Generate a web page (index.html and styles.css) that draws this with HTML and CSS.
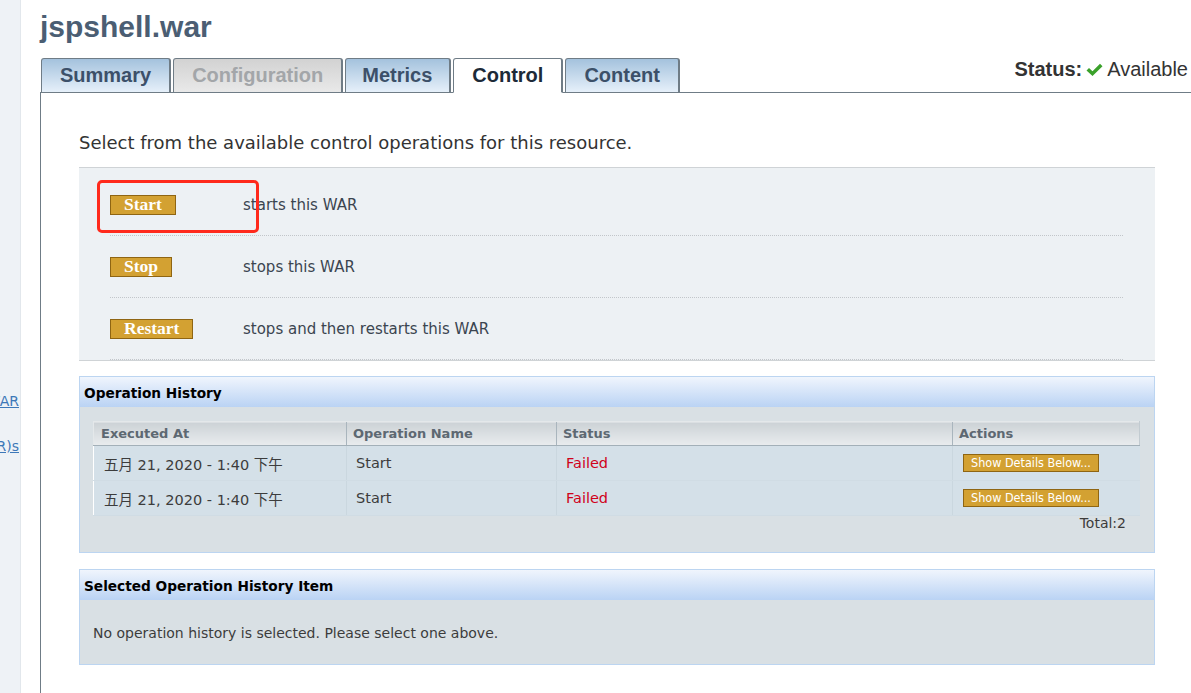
FILE: index.html
```html
<!DOCTYPE html>
<html>
<head>
<meta charset="utf-8">
<title>jspshell.war</title>
<link rel="stylesheet" href="styles.css">
</head>
<body>
<div class="page">
  <aside class="sidebar">
    <a class="side-link">jspshell.WAR</a>
    <a class="side-link second">Child Resource(R)s</a>
  </aside>
  <main class="main">
    <h1 class="title">jspshell.war</h1>
    <div class="tabbar">
      <nav class="tabs">
        <span class="tab">Summary</span>
        <span class="tab disabled">Configuration</span>
        <span class="tab narrow">Metrics</span>
        <span class="tab active">Control</span>
        <span class="tab">Content</span>
      </nav>
      <div class="status">
        <b>Status:</b>
        <svg class="check" width="17" height="14" viewBox="0 0 17 14"><path d="M0.5 7.5 L3 5 L6.5 8.3 L14 0.8 L16.5 3.3 L6.5 13 Z" fill="#3aa12a"/></svg>
        <span>Available</span>
      </div>
    </div>
    <section class="tabpanel">
      <p class="intro">Select from the available control operations for this resource.</p>
      <div class="ops">
        <div class="op-row">
          <span class="op-cell"><button class="btn">Start</button></span>
          <span class="op-desc">starts this WAR</span>
        </div>
        <div class="op-row">
          <span class="op-cell"><button class="btn">Stop</button></span>
          <span class="op-desc">stops this WAR</span>
        </div>
        <div class="op-row">
          <span class="op-cell"><button class="btn">Restart</button></span>
          <span class="op-desc">stops and then restarts this WAR</span>
        </div>
        <div class="highlight"></div>
      </div>

      <div class="panel">
        <div class="panel-head">Operation History</div>
        <div class="panel-body">
          <table class="grid">
            <thead>
              <tr>
                <th class="c1">Executed At</th>
                <th class="c2">Operation Name</th>
                <th class="c3">Status</th>
                <th class="c4">Actions</th>
              </tr>
            </thead>
            <tbody>
              <tr>
                <td class="c1">五月 21, 2020 - 1:40 下午</td>
                <td class="c2">Start</td>
                <td class="c3 failed">Failed</td>
                <td class="c4"><button class="btn small">Show Details Below...</button></td>
              </tr>
              <tr>
                <td class="c1">五月 21, 2020 - 1:40 下午</td>
                <td class="c2">Start</td>
                <td class="c3 failed">Failed</td>
                <td class="c4"><button class="btn small">Show Details Below...</button></td>
              </tr>
            </tbody>
          </table>
          <div class="total">Total:2</div>
        </div>
      </div>

      <div class="panel second">
        <div class="panel-head">Selected Operation History Item</div>
        <div class="panel-body note">No operation history is selected. Please select one above.</div>
      </div>
    </section>
  </main>
</div>
</body>
</html>
```
FILE: styles.css
```css
* { box-sizing: border-box; }

body {
  margin: 0;
  font-family: "DejaVu Sans", "Noto Sans CJK SC", sans-serif;
  color: #333;
  background: #fff;
}

.page {
  display: flex;
  height: 693px;
  overflow: hidden;
}

.sidebar {
  width: 21px;
  flex: none;
  background: #eef2f6;
  border-right: 1px solid #e2e7ec;
  padding-top: 392px;
  padding-right: 1px;
  display: flex;
  flex-direction: column;
  align-items: flex-end;
  overflow: hidden;
}

.side-link {
  white-space: nowrap;
  color: #3d78b8;
  text-decoration: underline;
  font-size: 14px;
  line-height: 18px;
}

.side-link.second { margin-top: 27px; }

.main {
  flex: 1;
  min-width: 0;
  padding-left: 19px;
  display: flex;
  flex-direction: column;
}

.title {
  margin: 0;
  padding-top: 11px;
  font: bold 30px/32px "Liberation Sans", Arial, sans-serif;
  color: #4b5e73;
}

.tabbar {
  margin-top: 15px;
  height: 35px;
  display: flex;
  justify-content: space-between;
  align-items: flex-end;
  border-bottom: 1px solid #6f7c86;
}

.tabs {
  display: flex;
  align-items: flex-end;
  gap: 2px;
  margin-left: 1px;
  margin-bottom: -1px;
}

.tab {
  height: 35px;
  padding: 0 18px;
  border: 1px solid #6f7c86;
  border-right-width: 2px;
  border-radius: 3px 3px 0 0;
  background: linear-gradient(#a4c2dd, #e6f0fa);
  font: bold 20px/33px "Liberation Sans", Arial, sans-serif;
  color: #3c5069;
}

.tab.narrow { padding: 0 17px 0 16px; }

.tab.disabled {
  background: linear-gradient(#d2d2d2, #e9e9e9);
  color: #a3a6a9;
}

.tab.active {
  background: #fff;
  border-bottom-color: #fff;
  color: #1d2a38;
}

.status {
  padding: 0 3px 11px 0;
  display: flex;
  align-items: center;
  gap: 4px;
  font: 20px/24px "Liberation Sans", Arial, sans-serif;
  color: #333;
}

.check { display: block; margin-top: 1px; }

.tabpanel {
  flex: 1;
  border-left: 1px solid #6f7c86;
  padding: 40px 36px 0 38px;
}

.intro {
  margin: 0 0 14px;
  font-size: 18px;
  line-height: 20px;
  color: #333;
}

.ops {
  position: relative;
  background: #edf1f4;
  border-top: 1px solid #cfd3d6;
  border-bottom: 1px solid #cfd3d6;
  padding-top: 6px;
}

.op-row {
  height: 62px;
  margin: 0 32px 0 31px;
  border-bottom: 1px dotted #c2c6ca;
  display: flex;
  align-items: center;
}

.op-cell {
  width: 133px;
  flex: none;
  display: flex;
}

.op-desc {
  font-size: 15px;
  color: #3b4550;
}

.btn {
  margin: 0;
  height: 20px;
  padding: 0 13px 1px;
  background: #d3a132;
  border: 1px solid #8f6512;
  border-radius: 0;
  color: #fff;
  font: bold 17.5px/17px "Liberation Serif", "Times New Roman", serif;
}

.btn.small {
  height: 18px;
  padding: 0 7px;
  font: 12.5px/16px "DejaVu Sans Condensed", "DejaVu Sans", sans-serif;
  font-stretch: condensed;
}

.highlight {
  position: absolute;
  left: 18px;
  top: 12px;
  width: 162px;
  height: 53px;
  border: 3px solid #ff2a1c;
  border-radius: 5px;
}

.panel {
  margin-top: 15px;
  border: 1px solid #bcd5f1;
  background: #d9e0e4;
}

.panel.second { margin-top: 16px; }

.panel-head {
  height: 30px;
  padding-left: 4px;
  background: linear-gradient(#f0f5fd, #bad3f4);
  font-weight: bold;
  font-size: 13.7px;
  line-height: 32px;
  color: #000;
}

.panel-body {
  padding: 14px 14px 22px 13px;
}

.grid {
  width: 100%;
  border-collapse: collapse;
  font-size: 14.5px;
}

.grid th {
  height: 24px;
  padding: 0 6px;
  text-align: left;
  font-size: 13px;
  font-weight: bold;
  color: #5d6872;
  background: linear-gradient(#ccd2d6, #e9ecee);
  border-left: 1px solid #a9b5bd;
  border-bottom: 1px solid #a3b0b8;
  border-top: 1px solid #e4e8ea;
}

.grid th.c1 { padding-left: 7px; border-left-color: #e4e8ea; }
.grid th.c4 { border-right: 1px solid #c2cbd1; }

.c1 { width: 253px; }
.c2 { width: 210px; }
.c3 { width: 396px; }

.grid td {
  height: 35px;
  padding: 0 9px;
  background: #d4e0e8;
  color: #3c3c3c;
  border-left: 1px solid #cad7df;
  border-bottom: 1px solid #d0dce4;
}

.grid td.c1 { padding-left: 10px; border-left-color: #fff; }
.grid td.c4 { padding-left: 10px; }
.grid td.failed { color: #d0021b; }

.total {
  text-align: right;
  padding-right: 14px;
  font-size: 14px;
  line-height: 14px;
  color: #3c3c3c;
}

.panel-body.note {
  padding: 24px 13px 22px;
  font-size: 14px;
  line-height: 18px;
  color: #3c3c3c;
}
```
